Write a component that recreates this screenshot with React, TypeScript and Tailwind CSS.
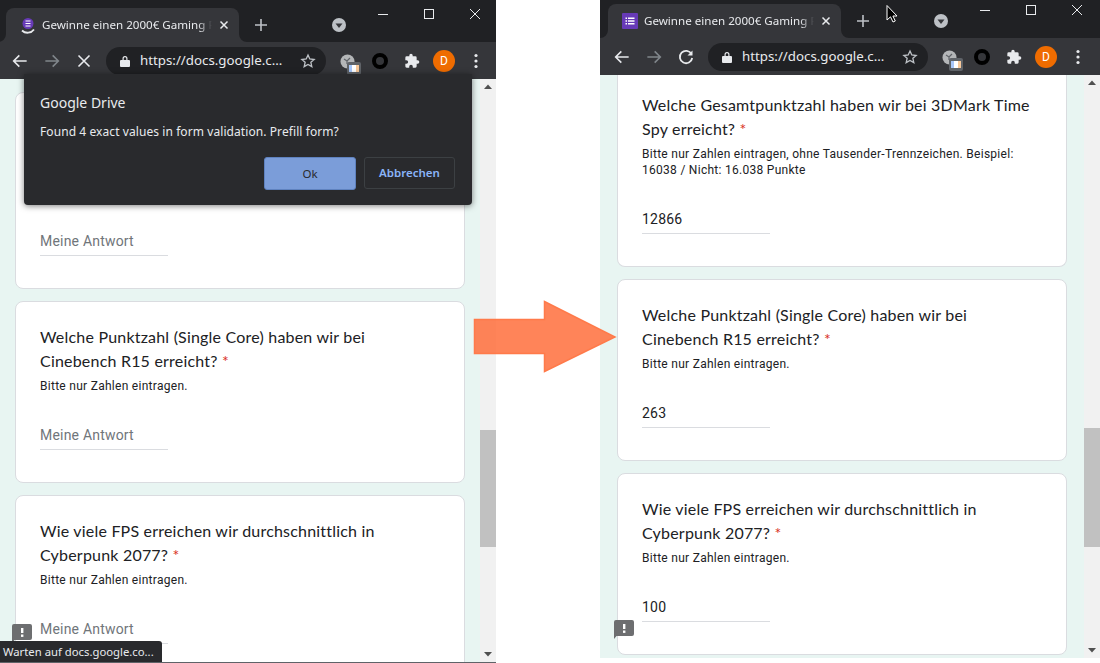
import React from "react";

const sans = "font-['Noto_Sans',sans-serif]";
const rob = "font-['Roboto',sans-serif]";

function Tri({ down }: { down?: boolean }) {
  return (
    <svg width="16" height="16" viewBox="0 0 16 16" className="block shrink-0">
      <path d={down ? "M4 6h8l-4 4.5z" : "M4 10h8L8 5.5z"} fill="#505050" />
    </svg>
  );
}

function Flare({ right }: { right?: boolean }) {
  return (
    <svg width="8" height="8" viewBox="0 0 8 8" className={right ? "absolute bottom-0 -right-2" : "absolute bottom-0 -left-2"}>
      <path d={right ? "M0 0v8h8A8 8 0 0 1 0 0z" : "M8 0v8H0A8 8 0 0 0 8 0z"} fill="#35363a" />
    </svg>
  );
}

function ExtIcons() {
  return (
    <div className="flex items-center">
      <div className="relative w-[14px] h-[14px] ml-[15px]">
        <svg width="15" height="15" viewBox="0 0 15 15" className="block">
          <circle cx="7.5" cy="7.5" r="7" fill="#b4b6b8" />
          <path d="M4 5l3 2 3-3M7 7v3" stroke="#5f6368" strokeWidth="1.2" fill="none" />
        </svg>
        <div className="absolute left-[7px] top-[8px] w-[14px] h-[13px] rounded-[2px] bg-[#5f6368] flex items-center justify-center">
          <svg width="10" height="7" viewBox="0 0 10 7" className="block">
            <rect width="10" height="7" fill="#fff" />
            <rect width="3" height="7" fill="#a8c7fa" />
            <rect x="7" width="3" height="7" fill="#f8c99b" />
          </svg>
        </div>
      </div>
      <div className="w-4 h-4 rounded-full border-[4px] border-black ml-[18px]" />
      <svg width="16" height="16" viewBox="0 0 24 24" className="block ml-[16px]" fill="#e8eaed">
        <path d="M20.5 11H19V7a2 2 0 0 0-2-2h-4V3.5a2.5 2.5 0 0 0-5 0V5H4a2 2 0 0 0-2 2v3.8h1.5a2.7 2.7 0 0 1 0 5.4H2V20a2 2 0 0 0 2 2h3.8v-1.5a2.7 2.7 0 0 1 5.4 0V22H17a2 2 0 0 0 2-2v-4h1.5a2.5 2.5 0 0 0 0-5z" />
      </svg>
      <div className={`w-[22px] h-[22px] rounded-full bg-[#ef6c00] text-white text-[12px] flex items-center justify-center ml-[13px] ${rob}`}>D</div>
      <svg width="4" height="16" viewBox="0 0 4 16" className="block ml-[19px]" fill="#e8eaed">
        <circle cx="2" cy="2.5" r="1.6" />
        <circle cx="2" cy="8" r="1.6" />
        <circle cx="2" cy="13.5" r="1.6" />
      </svg>
    </div>
  );
}

function Chrome({ loading, stripH, tabTop, shift }: { loading?: boolean; stripH: string; tabTop: string; shift: string }) {
  return (
    <div className="shrink-0">
      <div className={`${stripH} bg-[#202124] ${tabTop} ${shift} flex relative`}>
        <div className="relative w-[233px] bg-[#35363a] rounded-t-lg flex items-center pl-[14px] h-[34px]">
          <Flare />
          <Flare right />
          {loading ? (
            <svg width="16" height="18" viewBox="0 0 16 18" className="block shrink-0">
              <circle cx="8" cy="7.5" r="5.500" fill="#673ab7" />
              <rect x="5.5" y="4.5" width="5" height="1" fill="#fff" />
              <rect x="5.5" y="7" width="5" height="1" fill="#fff" />
              <rect x="5.5" y="9.500" width="5" height="1" fill="#fff" />
              <path d="M2 14.500a8 8 0 0 0 12-1" stroke="#e8eaed" strokeWidth="1.800" fill="none" />
            </svg>
          ) : (
            <svg width="16" height="16" viewBox="0 0 16 16" className="block shrink-0">
              <rect width="16" height="16" rx="1" fill="#673ab7" />
              <path d="M3.500 4.500h1.500v1.500H3.500zM6 4.500h6.500v1.500H6zM3.500 7.300h1.500v1.500H3.500zM6 7.300h6.500v1.500H6zM3.500 10h1.500v1.500H3.500zM6 10h6.500v1.500H6z" fill="#fff" />
            </svg>
          )}
          <div className={`ml-[6px] w-[170px] whitespace-nowrap text-[11.6px] text-[#e8eaed] [mask-image:linear-gradient(to_right,black_92%,transparent_100%)] ${sans}`}>
            Gewinne einen 2000€ Gaming P
          </div>
          <svg width="10" height="10" viewBox="0 0 10 10" className="block ml-[7px]" stroke="#e8eaed" strokeWidth="1.500">
            <path d="M1.500 1.500l7 7M8.500 1.500l-7 7" />
          </svg>
        </div>
        <svg width="12" height="12" viewBox="0 0 12 12" className="block ml-[16px] mt-[11px]" stroke="#bdc1c6" strokeWidth="1.600">
          <path d="M6 0v12M0 6h12" />
        </svg>
        <svg width="14" height="14" viewBox="0 0 14 14" className="block ml-[65px] mt-[10px]">
          <circle cx="7" cy="7" r="7" fill="#bdc1c6" />
          <path d="M3.500 5.500h7L7 10z" fill="#35363a" />
        </svg>
        <svg width="10" height="2" viewBox="0 0 10 2" className="block ml-[32px] mt-[6px]">
          <rect width="10" height="1" fill="#e8eaed" />
        </svg>
        <div className="w-[10px] h-[10px] border border-[#e8eaed] ml-[36px] mt-[1px]" />
        <svg width="10" height="10" viewBox="0 0 10 10" className="block ml-[36px] mt-[1px]" stroke="#e8eaed" strokeWidth="1">
          <path d="M0 0l10 10M10 0L0 10" />
        </svg>
      </div>
      <div className={`h-[37px] bg-[#35363a] flex items-center ${shift}`}>
        <svg width="16" height="16" viewBox="0 0 24 24" className="block ml-[6px]" fill="none" stroke="#e8eaed" strokeWidth="2.400">
          <path d="M22 12H3M11 3.500L2.500 12l8.500 8.500" />
        </svg>
        <svg width="16" height="16" viewBox="0 0 24 24" className="block ml-[16px]" fill="none" stroke="#80868b" strokeWidth="2.400">
          <path d="M2 12h19M13 3.500l8.500 8.500-8.500 8.500" />
        </svg>
        {loading ? (
          <svg width="16" height="16" viewBox="0 0 16 16" className="block ml-[16px]" stroke="#e8eaed" strokeWidth="1.600">
            <path d="M2.500 2.500l11 11M13.500 2.500l-11 11" />
          </svg>
        ) : (
          <svg width="16" height="16" viewBox="0 0 16 16" className="block ml-[16px]" fill="none" stroke="#e8eaed" strokeWidth="1.800">
            <path d="M13.500 5A6.200 6.200 0 1 0 14.200 9" />
            <path d="M14.500 1.500v5h-5z" fill="#e8eaed" stroke="none" />
          </svg>
        )}
        <div className="ml-[14px] w-[220px] h-[28px] rounded-full bg-[#202124] flex items-center pl-[13px]">
          <svg width="12" height="12" viewBox="0 0 12 12" className="block shrink-0" fill="#e8eaed">
            <path d="M2 5h8a1 1 0 0 1 1 1v5a1 1 0 0 1-1 1H2a1 1 0 0 1-1-1V6a1 1 0 0 1 1-1zM3.500 5V3.500a2.500 2.500 0 0 1 5 0V5H7.300V3.500a1.300 1.300 0 0 0-2.600 0V5z" />
          </svg>
          <span className={`ml-[9px] w-[142px] whitespace-nowrap text-[13.3px] text-[#e8eaed] ${sans}`}>https://docs.google.c...</span>
          <svg width="16" height="16" viewBox="0 0 24 24" className="block ml-[18px]" fill="none" stroke="#bdc1c6" strokeWidth="2">
            <path d="M12 3l2.700 6 6.500.7-4.900 4.300 1.400 6.400L12 17.100l-5.700 3.300 1.400-6.400L2.800 9.700 9.300 9z" />
          </svg>
        </div>
        <div className="-ml-px">
          <ExtIcons />
        </div>
      </div>
    </div>
  );
}

function Card({ q, children, answer, filled, className = "" }: { q?: React.ReactNode; children?: React.ReactNode; answer: string; filled?: boolean; className?: string }) {
  return (
    <div className={`w-[450px] shrink-0 mx-auto bg-white border border-[#dadce0] rounded-lg px-6 pb-8 ${className}`}>
      {q && <div className="text-[16px] leading-6 tracking-[0.2px] whitespace-nowrap text-[#202124] font-['Lato',sans-serif]">{q}</div>}
      {children && <div className={`mt-[5px] text-[12px] leading-4 tracking-[0.28px] whitespace-nowrap text-[#202124] ${rob}`}>{children}</div>}
      <div className={`mt-[31px] w-[128px] h-[25px] pb-1 border-b border-[#dadce0] text-[14px] leading-5 tracking-[0.2px] ${filled ? "text-[#202124]" : "text-[#70757a]"} ${rob}`}>
        {answer}
      </div>
    </div>
  );
}

function Req() {
  return <span className="text-[#d93025]"> *</span>;
}

function Scrollbar({ thumbTop, thumbH }: { thumbTop: string; thumbH: string }) {
  return (
    <div className="w-4 shrink-0 bg-[#f1f1f1] flex flex-col">
      <Tri />
      <div className={`${thumbTop} ${thumbH} bg-[#c1c1c1] shrink-0`} />
      <div className="mt-auto">
        <Tri down />
      </div>
    </div>
  );
}

function Feedback({ className }: { className: string }) {
  return (
    <svg width="20" height="20" viewBox="0 0 20 20" className={`absolute block ${className}`}>
      <path d="M2 0h16a2 2 0 0 1 2 2v12a2 2 0 0 1-2 2H2.500L0 19V2a2 2 0 0 1 2-2z" fill="#6d6e70" />
      <rect x="9" y="4" width="2.400" height="5" fill="#fff" />
      <rect x="9" y="10.500" width="2.400" height="2.400" fill="#fff" />
    </svg>
  );
}

const hintPlain = "Bitte nur Zahlen eintragen.";

export default function App() {
  return (
    <div className="relative w-[1100px] h-[663px] bg-white flex justify-between overflow-hidden">
      {/* Left window */}
      <div className="relative w-[496px] h-[663px] flex flex-col overflow-hidden">
        <Chrome loading stripH="h-[42px]" tabTop="pt-2" shift="pl-[6px]" />
        <div className="flex flex-1 min-h-0">
          <div className="flex-1 bg-[#e8f5f2] flex flex-col gap-3 pt-[13px] overflow-hidden">
            <Card answer="Meine Antwort" className="h-[197px] flex flex-col justify-end" />
            <Card q={<>Welche Punktzahl (Single Core) haben wir bei<br />Cinebench R15 erreicht?<Req /></>} answer="Meine Antwort" className="pt-[23px]">
              {hintPlain}
            </Card>
            <Card q={<>Wie viele FPS erreichen wir durchschnittlich in<br />Cyberpunk 2077?<Req /></>} answer="Meine Antwort" className="pt-[23px]">
              {hintPlain}
            </Card>
          </div>
          <Scrollbar thumbTop="mt-[335px]" thumbH="h-[117px]" />
        </div>
        <div className="h-px bg-[#5f6368] shrink-0" />
        <Feedback className="left-[12px] top-[624px]" />
        <div className={`absolute left-0 top-[641px] w-[162px] h-[21px] bg-[#292a2d] rounded-tr-[3px] pl-[3px] text-[11.3px] leading-[21px] text-[#e8eaed] whitespace-nowrap ${sans}`}>
          Warten auf docs.google.co...
        </div>
        <div className={`absolute left-[24px] top-[74px] w-[448px] h-[131px] bg-[#292a2d] rounded-b-[4px] shadow-[0_1px_6px_rgba(0,0,0,0.5)] pl-4 pr-[17px] ${sans}`}>
          <div className="mt-[19px] text-[14px] leading-5 text-[#e8eaed]">Google Drive</div>
          <div className="mt-[9px] text-[12px] leading-5 tracking-[0.08px] text-[#e8eaed]">Found 4 exact values in form validation. Prefill form?</div>
          <div className="mt-[15px] flex justify-end gap-2 text-[11.5px] font-semibold">
            <div className="w-[92px] h-[33px] rounded-[3px] bg-[#7b9dd9] border border-[#5f82bf] text-[#292a2d] flex items-center justify-center font-normal">Ok</div>
            <div className="w-[91px] h-[32px] rounded-[3px] border border-[#3c4043] text-[#8ab4f8] flex items-center justify-center">Abbrechen</div>
          </div>
        </div>
      </div>

      {/* Right window */}
      <div className="relative w-[500px] h-[658px] flex flex-col overflow-hidden">
        <Chrome stripH="h-[38px]" tabTop="pt-1" shift="pl-[8px]" />
        <div className="flex flex-1 min-h-0">
          <div className="flex-1 bg-[#e8f5f2] flex flex-col gap-3 overflow-hidden">
            <Card q={<>Welche Gesamtpunktzahl haben wir bei 3DMark Time<br />Spy erreicht?<Req /></>} answer="12866" filled className="pt-[18px] rounded-t-none border-t-0">
              Bitte nur Zahlen eintragen, ohne Tausender-Trennzeichen. Beispiel:<br />16038 / Nicht: 16.038 Punkte
            </Card>
            <Card q={<>Welche Punktzahl (Single Core) haben wir bei<br />Cinebench R15 erreicht?<Req /></>} answer="263" filled className="pt-[23px]">
              {hintPlain}
            </Card>
            <Card q={<>Wie viele FPS erreichen wir durchschnittlich in<br />Cyberpunk 2077?<Req /></>} answer="100" filled className="pt-[23px]">
              {hintPlain}
            </Card>
          </div>
          <Scrollbar thumbTop="mt-[337px]" thumbH="h-[119px]" />
        </div>
        <Feedback className="left-[14px] top-[620px]" />
      </div>

      {/* Annotation arrow */}
      <svg width="146" height="76" viewBox="0 0 146 76" className="absolute left-[472px] top-[299px] block">
        <path d="M2.500 20.500H72.500V2.500L143 38 72.500 72.500V54.500H2.500z" fill="#ff6f3c" fillOpacity="0.85" stroke="#ff7a4a" strokeWidth="1.500" />
      </svg>
      {/* Mouse cursor */}
      <svg width="12" height="18" viewBox="0 0 12 18" className="absolute left-[886px] top-[5px] block">
        <path d="M1 0.500V15l3.500-3.200L7 17l2.300-1-2.400-5H11z" fill="#000" stroke="#fff" strokeWidth="1" />
      </svg>
    </div>
  );
}
